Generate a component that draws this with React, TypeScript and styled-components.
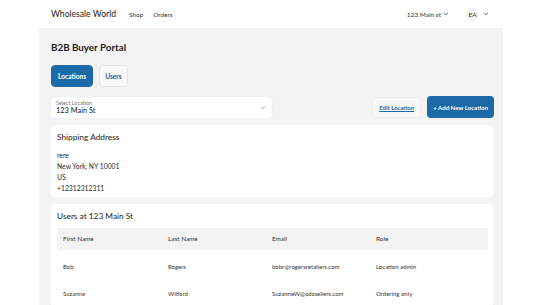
import React from "react";
import styled, { createGlobalStyle } from "styled-components";

const Global = createGlobalStyle`
  html, body { margin: 0; padding: 0; background: #ffffff; }
  body { font-family: Lato, "Open Sans", "Liberation Sans", sans-serif; color: #222; }
  * { box-sizing: border-box; }
`;

const BLUE = "#1b6aa6";

const Header = styled.header`
  height: 28px;
  display: flex;
  align-items: center;
  padding: 0 0 0 51px;
  width: 503px;
`;

const Brand = styled.div`
  font-size: 8.6px;
  color: #222;
  margin-right: 13px;
`;

const NavLink = styled.span`
  font-size: 6.4px;
  color: #333;
  margin-right: 10px;
`;

const Spacer = styled.div`
  flex: 1;
`;

const HeaderMenu = styled.div<{ $gap?: number; $mr?: number }>`
  display: flex;
  align-items: center;
  gap: ${(p) => p.$gap ?? 2}px;
  font-size: 6.5px;
  color: #333;
  margin-right: ${(p) => p.$mr ?? 14}px;
`;

const Avatar = styled.div`
  width: 13px;
  height: 13px;
  border-radius: 50%;
  background: #f2f2f2;
  display: flex;
  align-items: center;
  justify-content: center;
  font-size: 6.4px;
  color: #333;
`;

const Panel = styled.main`
  margin-left: 39px;
  width: 464px;
  min-height: 277px;
  background: #f3f3f3;
  padding: 10px 9px 0 12px;
`;

const Title = styled.h1`
  margin: 0;
  font-size: 9.8px;
  font-weight: 700;
  height: 18px;
  line-height: 18px;
  color: #222;
`;

const Tabs = styled.div`
  display: flex;
  gap: 6px;
  margin-top: 9px;
`;

const Tab = styled.button<{ $active?: boolean }>`
  height: 22px;
  padding: 0 ${(p) => (p.$active ? 6 : 5)}px;
  border-radius: 4px;
  font-family: inherit;
  font-size: 6.6px;
  font-weight: 700;
  border: 1px solid ${(p) => (p.$active ? BLUE : "#e6e6e6")};
  background: ${(p) => (p.$active ? BLUE : "#f7f7f7")};
  color: ${(p) => (p.$active ? "#fff" : BLUE)};
`;

const Toolbar = styled.div`
  display: flex;
  align-items: center;
  margin-top: 9px;
  height: 22px;
  gap: 6px;
`;

const SelectBox = styled.div`
  width: 221px;
  height: 21px;
  background: #fff;
  border-radius: 3px;
  box-shadow: 0 0 1px rgba(0, 0, 0, 0.12);
  display: flex;
  align-items: center;
  padding: 1px 6px 0 5px;
`;

const SelectText = styled.div`
  flex: 1;
  display: flex;
  flex-direction: column;
`;

const SelectLabel = styled.span`
  font-size: 5.4px;
  color: #777;
  line-height: 6.5px;
`;

const SelectValue = styled.span`
  font-size: 7.4px;
  color: #222;
  line-height: 8.5px;
`;

const GhostButton = styled.button`
  height: 21px;
  padding: 0 6px;
  border-radius: 3px;
  border: 1px solid #ececec;
  background: #f7f7f7;
  font-family: inherit;
  font-size: 6px;
  font-weight: 700;
  color: ${BLUE};
  text-decoration: underline;
`;

const PrimaryButton = styled.button`
  height: 22px;
  padding: 0 6px;
  border-radius: 4px;
  border: none;
  background: ${BLUE};
  font-family: inherit;
  font-size: 6.1px;
  font-weight: 700;
  color: #fff;
`;

const Card = styled.section`
  background: #fff;
  border-radius: 4px;
  margin-top: 7px;
  width: 442px;
  padding: 6px 6px 3px 6px;
`;

const CardTitle = styled.h2`
  margin: 0;
  font-size: 8.3px;
  font-weight: 400;
  color: #222;
  height: 12px;
  line-height: 12px;
`;

const AddressLines = styled.div`
  margin-top: 6.5px;
  display: flex;
  flex-direction: column;
`;

const AddressLine = styled.div`
  font-size: 6.8px;
  line-height: 11px;
  color: #2a2a2a;
`;

const Table = styled.div`
  margin-top: 6px;
  display: grid;
  grid-template-columns: 105px 104px 104px 1fr;
  width: 431px;
`;

const HeadCell = styled.div`
  background: #f3f3f3;
  height: 22px;
  display: flex;
  align-items: center;
  padding-left: 6px;
  font-size: 6.4px;
  color: #333;
`;

const Cell = styled.div`
  height: 27px;
  display: flex;
  align-items: center;
  padding-left: 6px;
  padding-top: 7px;
  font-size: 6px;
  color: #333;
`;

const Chevron = ({ size = 6, color = "#555" }: { size?: number; color?: string }) => (
  <svg width={size} height={size} viewBox="0 0 10 10" fill="none">
    <path d="M2.5 3.8 L5 6.3 L7.5 3.8" stroke={color} strokeWidth="1.4" strokeLinecap="round" strokeLinejoin="round" />
  </svg>
);

const users = [
  { first: "Bob", last: "Rogers", email: "bobr@rogersretailers.com", role: "Location admin" },
  { first: "Suzanne", last: "Wilford", email: "SuzanneW@odzsellers.com", role: "Ordering only" },
];

export default function App() {
  return (
    <>
      <Global />
      <Header>
        <Brand>Wholesale World</Brand>
        <NavLink>Shop</NavLink>
        <NavLink>Orders</NavLink>
        <Spacer />
        <HeaderMenu $mr={17}>
          123 Main st <Chevron size={6} color="#444" />
        </HeaderMenu>
        <HeaderMenu $gap={4}>
          <Avatar>EA</Avatar>
          <Chevron size={6} color="#444" />
        </HeaderMenu>
      </Header>
      <Panel>
        <Title>B2B Buyer Portal</Title>
        <Tabs>
          <Tab $active>Locations</Tab>
          <Tab>Users</Tab>
        </Tabs>
        <Toolbar>
          <SelectBox>
            <SelectText>
              <SelectLabel>Select Location</SelectLabel>
              <SelectValue>123 Main St</SelectValue>
            </SelectText>
            <Chevron size={6} color="#888" />
          </SelectBox>
          <Spacer />
          <GhostButton>Edit Location</GhostButton>
          <PrimaryButton>+ Add New Location</PrimaryButton>
        </Toolbar>
        <Card>
          <CardTitle>Shipping Address</CardTitle>
          <AddressLines>
            <AddressLine>rere</AddressLine>
            <AddressLine>New York, NY 10001</AddressLine>
            <AddressLine>US</AddressLine>
            <AddressLine>+12312312311</AddressLine>
          </AddressLines>
        </Card>
        <Card>
          <CardTitle>Users at 123 Main St</CardTitle>
          <Table>
            <HeadCell>First Name</HeadCell>
            <HeadCell>Last Name</HeadCell>
            <HeadCell>Email</HeadCell>
            <HeadCell>Role</HeadCell>
            {users.map((u) => (
              <React.Fragment key={u.email}>
                <Cell>{u.first}</Cell>
                <Cell>{u.last}</Cell>
                <Cell>{u.email}</Cell>
                <Cell>{u.role}</Cell>
              </React.Fragment>
            ))}
          </Table>
        </Card>
      </Panel>
    </>
  );
}
